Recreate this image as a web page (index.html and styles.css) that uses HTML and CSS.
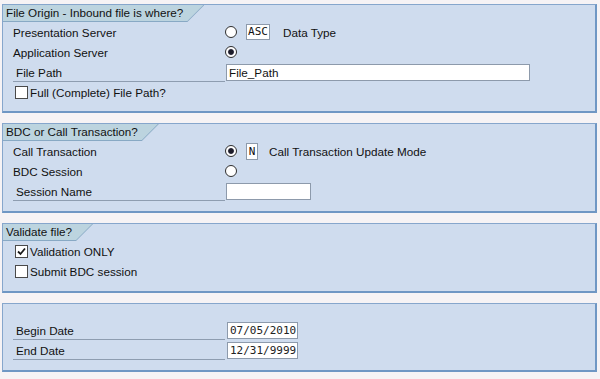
FILE: index.html
```html
<!DOCTYPE html>
<html lang="en">
<head>
    <meta charset="UTF-8">
    <title>Upload Selection</title>
    <link rel="stylesheet" href="styles.css">
</head>
<body>

<div class="screen">

    <section class="group group-file">
        <div class="tab"><span class="tab-text">File Origin - Inbound file is where?</span></div>
        <div class="rows">
            <div class="row">
                <span class="label">Presentation Server</span>
                <span class="radio"></span>
                <span class="code code-asc">ASC</span>
                <span class="note">Data Type</span>
            </div>
            <div class="row">
                <span class="label">Application Server</span>
                <span class="radio checked"></span>
            </div>
            <div class="row">
                <span class="label field">File Path</span>
                <span class="input input-path">File_Path</span>
            </div>
            <div class="row">
                <span class="check"></span>
                <span class="check-label">Full (Complete) File Path?</span>
            </div>
        </div>
    </section>

    <section class="group group-bdc">
        <div class="tab"><span class="tab-text">BDC or Call Transaction?</span></div>
        <div class="rows">
            <div class="row">
                <span class="label">Call Transaction</span>
                <span class="radio checked"></span>
                <span class="code code-mode">N</span>
                <span class="note note-mode">Call Transaction Update Mode</span>
            </div>
            <div class="row">
                <span class="label">BDC Session</span>
                <span class="radio"></span>
            </div>
            <div class="row">
                <span class="label field">Session Name</span>
                <span class="input input-session"></span>
            </div>
        </div>
    </section>

    <section class="group group-validate">
        <div class="tab"><span class="tab-text">Validate file?</span></div>
        <div class="rows">
            <div class="row">
                <span class="check checked">
                    <svg width="11" height="11" viewBox="0 0 11 11"><polyline points="2,5.5 4.5,8 9,2.5" fill="none" stroke="#1a1a1a" stroke-width="1.8"/></svg>
                </span>
                <span class="check-label">Validation ONLY</span>
            </div>
            <div class="row">
                <span class="check"></span>
                <span class="check-label">Submit BDC session</span>
            </div>
        </div>
    </section>

    <section class="group group-dates">
        <div class="rows">
            <div class="row">
                <span class="label field">Begin Date</span>
                <span class="input input-date">07/05/2010</span>
            </div>
            <div class="row">
                <span class="label field">End Date</span>
                <span class="input input-date">12/31/9999</span>
            </div>
        </div>
    </section>

</div>

</body>
</html>
```

FILE: styles.css
```css
body {
    margin: 0;
    background-color: #f6f3f5;
    font-family: "Liberation Sans", Arial, sans-serif;
    font-size: 11.7px;
    color: #111;
}

.screen {
    display: flex;
    flex-direction: column;
    gap: 10px;
    padding: 4px 3px 0 2px;
}

.group {
    display: flex;
    flex-direction: column;
    background-color: #cfdcee;
    border: 1px solid #86a6cc;
    border-right: 2px solid #6f97c4;
    border-bottom: 2px solid #6f97c4;
}

.group-file {
    height: 109px;
    box-sizing: border-box;
}

.group-bdc {
    height: 90px;
    box-sizing: border-box;
}

.group-validate {
    height: 70px;
    box-sizing: border-box;
}

.group-dates {
    height: 69px;
    box-sizing: border-box;
    padding-top: 16px;
}

/* header tab with the slanted right edge */
.tab {
    align-self: flex-start;
    background-color: #88a9c4;
    padding: 0 1px 1px 0;
    clip-path: polygon(0 0, 100% 0, calc(100% - 17px) 100%, 0 100%);
}

.tab-text {
    display: block;
    height: 16px;
    line-height: 16px;
    padding: 0 20px 0 3px;
    background-color: #bcd4df;
    clip-path: polygon(0 0, 100% 0, calc(100% - 16px) 100%, 0 100%);
}

.rows {
    display: flex;
    flex-direction: column;
    padding-left: 10px;
}

.row {
    display: flex;
    align-items: center;
    height: 20px;
}

.label {
    width: 212px;
    flex: none;
}

.label.field {
    align-self: stretch;
    display: flex;
    align-items: center;
    box-sizing: border-box;
    padding-left: 3px;
    padding-top: 1px;
    border-bottom: 1px solid #8e9db0;
}

.radio {
    width: 12px;
    height: 12px;
    box-sizing: border-box;
    border: 1px solid #2e2e2e;
    border-radius: 50%;
    background-color: #fff;
}

.radio.checked {
    background: radial-gradient(circle, #1c1c2a 0 2.4px, #8a8a96 2.9px, #fff 3.6px);
}

.code {
    box-sizing: border-box;
    height: 16px;
    line-height: 14px;
    margin-left: 9px;
    border: 1px solid #8d9aab;
    background-color: #fff;
    font-family: "DejaVu Sans Mono", "Liberation Mono", monospace;
    font-size: 11px;
    text-align: center;
}

.code-asc {
    width: 24px;
}

.code-mode {
    width: 12px;
    height: 17px;
    line-height: 15px;
}

.note {
    margin-left: 13px;
}

.note-mode {
    margin-left: 11px;
}

.input {
    box-sizing: border-box;
    height: 17px;
    line-height: 15px;
    margin-left: 1px;
    padding-left: 2px;
    border: 1px solid #8d9aab;
    background-color: #fff;
}

.input-path {
    width: 304px;
}

.input-session {
    width: 85px;
}

.input-date {
    width: 71px;
    margin-left: 2px;
    font-family: "DejaVu Sans Mono", "Liberation Mono", monospace;
    font-size: 11px;
    color: #222;
}

.check {
    display: flex;
    align-items: center;
    justify-content: center;
    width: 13px;
    height: 13px;
    box-sizing: border-box;
    margin-left: 2px;
    border: 1px solid #4a4a4a;
    background-color: #fff;
}

.check-label {
    margin-left: 2px;
}
```
